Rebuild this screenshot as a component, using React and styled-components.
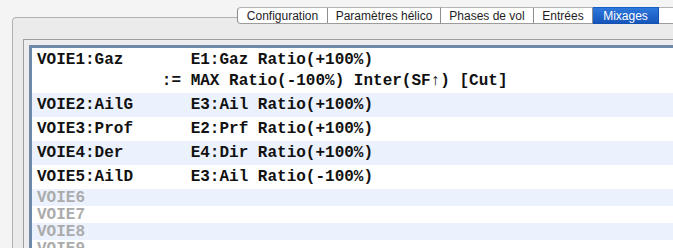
import React from "react";
import styled, { createGlobalStyle } from "styled-components";

const GlobalStyle = createGlobalStyle`
  html, body {
    margin: 0;
    padding: 0;
    background: #f4f4f4;
  }
  body {
    width: 673px;
    height: 248px;
    overflow: hidden;
  }
`;

const tabs = [
  { label: "Configuration", width: 91 },
  { label: "Paramètres hélico", width: 113 },
  { label: "Phases de vol", width: 93 },
  { label: "Entrées", width: 59 },
  { label: "Mixages", width: 66, active: true },
  { label: "Simulateur", width: 90 },
];

const channels = [
  {
    name: "VOIE1:Gaz",
    mixes: [
      { text: "E1:Gaz Ratio(+100%)" },
      { op: ":=", text: "MAX Ratio(-100%) Inter(SF↑) [Cut]" },
    ],
  },
  { name: "VOIE2:AilG", mixes: [{ text: "E3:Ail Ratio(+100%)" }] },
  { name: "VOIE3:Prof", mixes: [{ text: "E2:Prf Ratio(+100%)" }] },
  { name: "VOIE4:Der", mixes: [{ text: "E4:Dir Ratio(+100%)" }] },
  { name: "VOIE5:AilD", mixes: [{ text: "E3:Ail Ratio(-100%)" }] },
  ...Array.from({ length: 10 }, (_, i) => ({ name: `VOIE${i + 6}`, mixes: [] })),
];

const Page = styled.div`
  padding: 7px 0 0 12px;
  font-family: "Liberation Sans", Arial, sans-serif;
`;

const TabBar = styled.div`
  position: relative;
  z-index: 1;
  display: flex;
  padding-left: 225px;
  height: 17px;
  white-space: nowrap;
`;

const Tab = styled.div`
  box-sizing: border-box;
  flex: 0 0 ${(p) => p.$w}px;
  height: 17px;
  display: flex;
  align-items: center;
  justify-content: center;
  font-size: 12px;
  color: ${(p) => (p.$active ? "#ffffff" : "#1e1e1e")};
  background: ${(p) =>
    p.$active ? "linear-gradient(#2f78dc, #1556bb)" : "#ffffff"};
  border-top: 1px solid ${(p) => (p.$active ? "#1a5fc6" : "#b4b4b4")};
  border-bottom: 1px solid ${(p) => (p.$active ? "#1450b0" : "#9c9c9c")};
  border-right: 1px solid ${(p) => (p.$active ? "#1450b0" : "#8e8e8e")};
  &:first-child {
    border-left: 1px solid #8e8e8e;
    border-radius: 4px 0 0 4px;
  }
`;

const Panel = styled.div`
  margin-top: -7px;
  width: 760px;
  height: 260px;
  box-sizing: border-box;
  background: #ebebeb;
  border: 1px solid #b0b0b0;
  border-radius: 4px 0 0 0;
  padding: 21px 0 0 10px;
`;

const Frame = styled.div`
  height: 100%;
  border: 1px solid #9e9e9e;
  border-right: none;
  border-bottom: none;
  padding: 5px 0 0 5px;
  background: #ededed;
`;

const List = styled.div`
  height: 100%;
  border: 3px solid #7189a9;
  border-right: none;
  border-bottom: none;
  background: #ffffff;
  font-family: "Liberation Mono", "DejaVu Sans Mono", monospace;
  font-size: 16px;
  font-weight: 700;
`;

const Row = styled.div`
  display: grid;
  grid-template-columns: 16ch auto;
  justify-content: start;
  padding: ${(p) => (p.$empty ? "1px 0 0 5px" : "2px 0 1px 5px")};
  line-height: ${(p) => (p.$empty ? "16px" : "21px")};
  background: ${(p) => (p.$odd ? "#ecf2fd" : "#ffffff")};
  white-space: pre;
`;

const Name = styled.span`
  color: ${(p) => (p.$empty ? "#ababab" : "#111111")};
`;

const Op = styled.span`
  grid-column: 1;
  text-align: right;
  padding-right: 1ch;
  color: #111111;
`;

const Mix = styled.span`
  grid-column: 2;
  color: #111111;
`;

export default function App() {
  return (
    <>
      <GlobalStyle />
      <Page>
        <TabBar>
          {tabs.map((t) => (
            <Tab key={t.label} $w={t.width} $active={t.active}>
              {t.label}
            </Tab>
          ))}
        </TabBar>
        <Panel>
          <Frame>
            <List>
              {channels.map((c, i) => {
                const empty = c.mixes.length === 0;
                return (
                  <Row key={c.name} $odd={i % 2 === 1} $empty={empty}>
                    <Name $empty={empty}>{c.name}</Name>
                    {c.mixes.map((m, j) => (
                      <React.Fragment key={j}>
                        {m.op && <Op>{m.op}</Op>}
                        <Mix>{m.text}</Mix>
                      </React.Fragment>
                    ))}
                  </Row>
                );
              })}
            </List>
          </Frame>
        </Panel>
      </Page>
    </>
  );
}
